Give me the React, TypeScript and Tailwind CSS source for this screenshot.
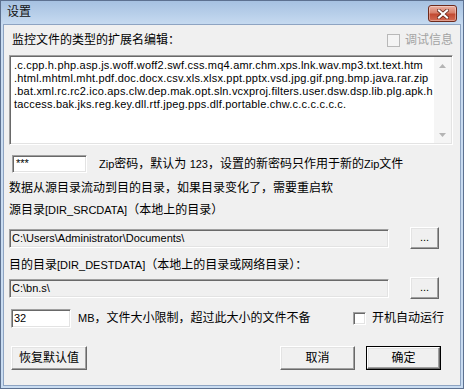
import React from "react";

const sunken =
  "border border-t-[#a0a0a0] border-l-[#a0a0a0] border-b-white border-r-white shadow-[inset_1px_1px_0_#696969,inset_-1px_-1px_0_#e3e3e3]";
const raised =
  "border border-t-white border-l-white border-b-[#696969] border-r-[#696969] shadow-[inset_-1px_-1px_0_#a0a0a0,inset_1px_1px_0_#e3e3e3] bg-[#f0f0f0]";

const lines = [
  ".c.cpp.h.php.asp.js.woff.woff2.swf.css.mq4.amr.chm.xps.lnk.wav.mp3.txt.text.htm",
  ".html.mhtml.mht.pdf.doc.docx.csv.xls.xlsx.ppt.pptx.vsd.jpg.gif.png.bmp.java.rar.zip",
  ".bat.xml.rc.rc2.ico.aps.clw.dep.mak.opt.sln.vcxproj.filters.user.dsw.dsp.lib.plg.apk.h",
  "taccess.bak.jks.reg.key.dll.rtf.jpeg.pps.dlf.portable.chw.c.c.c.c.c.c.",
];

function Lat({ children }: { children: React.ReactNode }) {
  return <span className="text-[11px]">{children}</span>;
}

function Btn({ children, className = "" }: { children: React.ReactNode; className?: string }) {
  return (
    <div className={`${raised} flex items-center justify-center text-[12px] leading-none ${className}`}>
      {children}
    </div>
  );
}

export default function App() {
  return (
    <div className="w-[464px] h-[389px] flex flex-col border border-[#5d7190] bg-[#c9dcf1] text-black font-['Liberation_Sans','Noto_Sans_CJK_SC',sans-serif] overflow-hidden">
      {/* title bar */}
      <div className="h-[23px] flex items-start justify-between pl-[6px] pr-[6px] bg-[linear-gradient(to_bottom,#a6c1e1,#c6daf0)]">
        <div className="text-[12px] leading-[23px] text-[#111]">设置</div>
        <div className="mt-[4px] w-[29px] h-[17px] rounded-[3px] border border-[#6e2a1c] bg-[linear-gradient(to_bottom,#eab0a2,#d8806b_45%,#c24a32_55%,#d36c55)] flex items-center justify-center shadow-[inset_0_0_0_1px_rgba(255,255,255,0.35)]">
          <svg width="12" height="10" viewBox="0 0 12 10">
            <path d="M2 1.5 L10 8.5 M10 1.5 L2 8.5" stroke="#5a1d12" strokeWidth="3.6" strokeLinecap="square" />
            <path d="M2 1.5 L10 8.5 M10 1.5 L2 8.5" stroke="#ffffff" strokeWidth="2.2" strokeLinecap="square" />
          </svg>
        </div>
      </div>
      {/* frame */}
      <div className="flex-1 flex flex-col px-[2px] pb-[2px]">
        <div className="flex-1 flex flex-col border border-[#8ea4c2] bg-[#f0f0f0] pt-[5px]">
          {/* row 1 */}
          <div className="h-[20px] flex items-center">
            <div className="ml-[8px] text-[12px] leading-[20px]">监控文件的类型的扩展名编辑：</div>
            <div className="ml-auto mr-[7px] flex items-center gap-[5px]">
              <div className="w-[13px] h-[13px] border border-[#b8b8b8] bg-[#f4f4f4]" />
              <div className="text-[12px] leading-[20px] text-[#a3a3a3]">调试信息</div>
            </div>
          </div>
          {/* textarea */}
          <div className={`mt-[5px] ml-[5px] w-[444px] h-[90px] bg-white flex ${sunken}`}>
            <div className="flex-1 pl-[4px] pt-[3px] font-['Liberation_Sans',sans-serif] text-[11px] leading-[13px] tracking-[0.2px] whitespace-nowrap overflow-hidden">
              {lines.map((l) => (
                <div key={l}>{l}</div>
              ))}
            </div>
            <div className="w-[17px] mt-[1px] mb-[1px] mr-[1px] bg-[#f5f5f5] flex flex-col justify-between">
              <div className="h-[17px] flex items-center justify-center">
                <svg width="7" height="4" viewBox="0 0 7 4">
                  <polygon points="3.5,0 7,4 0,4" fill="#b4b4b4" />
                </svg>
              </div>
              <div className="h-[17px] flex items-center justify-center">
                <svg width="7" height="4" viewBox="0 0 7 4">
                  <polygon points="0,0 7,0 3.5,4" fill="#b4b4b4" />
                </svg>
              </div>
            </div>
          </div>
          {/* zip row */}
          <div className="mt-[10px] h-[18px] flex items-center">
            <div className={`ml-[8px] w-[75px] h-[18px] bg-white ${sunken} pl-[3px] text-[11px] leading-[14px]`}>***</div>
            <div className="ml-[12px] text-[12px] leading-[18px]">
              <Lat>Zip</Lat>密码，默认为 <Lat>123</Lat>，设置的新密码只作用于新的<Lat>Zip</Lat>文件
            </div>
          </div>
          <div className="mt-[5px] h-[20px] pl-[5px] text-[12px] leading-[20px]">
            数据从源目录流动到目的目录，如果目录变化了，需要重启软
          </div>
          <div className="mt-[2px] h-[20px] pl-[5px] text-[12px] leading-[20px]">
            源目录<Lat>[DIR_SRCDATA]</Lat>（本地上的目录）
          </div>
          <div className="mt-[7px] h-[22px] flex items-center pl-[5px]">
            <div className={`w-[380px] h-[19px] bg-[#f0f0f0] ${sunken} pl-[2px] text-[11px] leading-[17px] font-['Liberation_Sans',sans-serif]`}>
              C:\Users\Administrator\Documents\
            </div>
            <Btn className="ml-[21px] w-[29px] h-[22px] pb-[2px]">
              <span className="text-[11px] font-['Liberation_Sans',sans-serif]">...</span>
            </Btn>
          </div>
          <div className="mt-[6px] h-[20px] pl-[5px] text-[12px] leading-[20px]">
            目的目录<Lat>[DIR_DESTDATA]</Lat>（本地上的目录或网络目录）：
          </div>
          <div className="mt-[2px] h-[22px] flex items-center pl-[5px]">
            <div className={`w-[380px] h-[19px] bg-[#f0f0f0] ${sunken} pl-[2px] text-[11px] leading-[17px] font-['Liberation_Sans',sans-serif]`}>
              C:\bn.s\
            </div>
            <Btn className="ml-[21px] w-[29px] h-[22px] pb-[2px]">
              <span className="text-[11px] font-['Liberation_Sans',sans-serif]">...</span>
            </Btn>
          </div>
          {/* MB row */}
          <div className="mt-[9px] h-[20px] flex items-center">
            <div className={`ml-[7px] w-[60px] h-[19px] bg-white ${sunken} pl-[2px] text-[11px] leading-[17px] font-['Liberation_Sans',sans-serif]`}>
              32
            </div>
            <div className="ml-[7px] text-[12px] leading-[20px]">
              <Lat>MB</Lat>，文件大小限制，超过此大小的文件不备
            </div>
            <div className="ml-auto mr-[16px] flex items-center gap-[6px]">
              <div className={`w-[13px] h-[13px] bg-white ${sunken}`} />
              <div className="text-[12px] leading-[20px]">开机自动运行</div>
            </div>
          </div>
          {/* buttons */}
          <div className="mt-[18px] h-[24px] flex items-center">
            <Btn className="ml-[7px] w-[76px] h-[24px]">恢复默认值</Btn>
            <Btn className="ml-auto w-[75px] h-[24px]">取消</Btn>
            <div className="ml-[11px] mr-[19px] w-[75px] h-[24px] border border-black flex">
              <Btn className="flex-1">确定</Btn>
            </div>
          </div>
        </div>
      </div>
    </div>
  );
}
